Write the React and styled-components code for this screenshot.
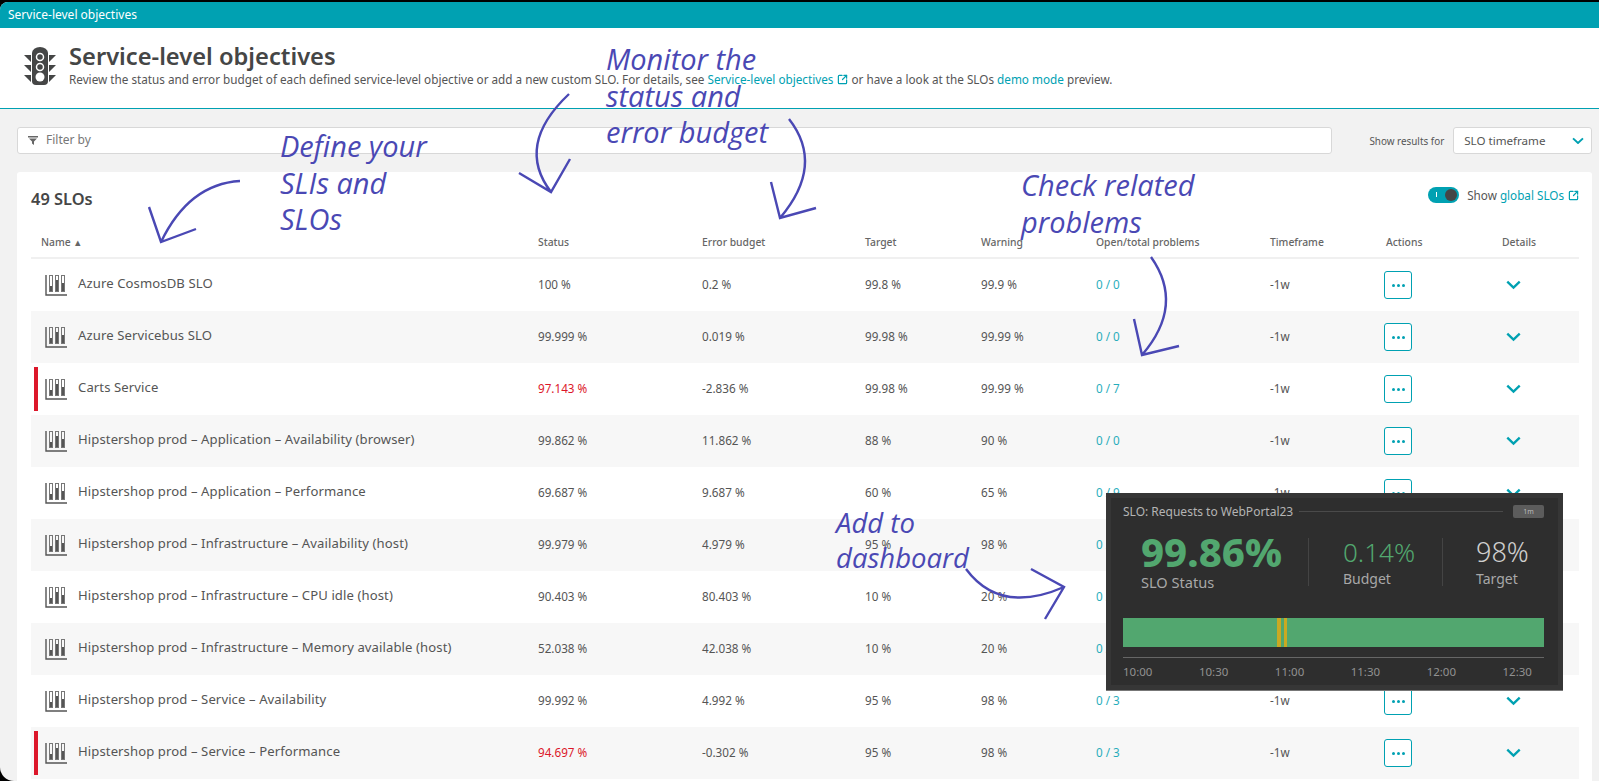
import React from 'react';
import styled, { createGlobalStyle } from 'styled-components';
import { SquareArrowOutUpRight } from 'lucide-react';

const Global = createGlobalStyle`
  html, body { margin: 0; padding: 0; background: #e9e7f6; }
  body { font-family: "Noto Sans", "Open Sans", sans-serif; color: #555; }
  * { box-sizing: border-box; }
`;

const Frame = styled.div`
  position: relative;
  width: 1599px;
  height: 781px;
  overflow: hidden;
  background: #000;
  padding-top: 2px;
`;
const Window = styled.div`
  height: 779px;
  background: #f2f2f2;
  border-radius: 8px 0 0 14px;
  overflow: hidden;
  display: flex;
  flex-direction: column;
`;
const TopBar = styled.div`
  height: 26px;
  flex: none;
  background: #00a1b2;
  color: #fff;
  font-size: 12px;
  line-height: 26px;
  padding-left: 8px;
`;
const Header = styled.header`
  height: 81px;
  flex: none;
  background: #fff;
  border-bottom: 1px solid #00a1b2;
  display: flex;
  align-items: flex-start;
  padding: 15px 0 0 23px;
  gap: 12px;
`;
const HeaderText = styled.div`
  display: flex;
  flex-direction: column;
`;
const Title = styled.h1`
  margin: 0;
  font-size: 23.7px;
  line-height: 26px;
  font-weight: 600;
  color: #454646;
`;
const Sub = styled.p`
  margin: 3px 0 0;
  font-size: 11.72px;
  line-height: 15px;
  color: #555;
  white-space: nowrap;
`;
const Link = styled.span`
  color: #00a1b2;
`;
const ExtIcon = styled(SquareArrowOutUpRight)`
  color: #00a1b2;
  vertical-align: -1px;
  margin-left: 4px;
`;
const Content = styled.main`
  flex: 1;
  padding: 18px 7px 0 17px;
  display: flex;
  flex-direction: column;
  gap: 18px;
`;
const FilterRow = styled.div`
  display: flex;
  align-items: center;
  height: 27px;
`;
const FilterBox = styled.div`
  width: 1318px;
  height: 27px;
  background: #fff;
  border: 1px solid #d8d8d8;
  border-radius: 3px;
  display: flex;
  align-items: center;
  gap: 8px;
  padding: 0 0 2px 10px;
  font-size: 12px;
  color: #777;
`;
const ResultsLabel = styled.span`
  margin-left: 37px;
  font-size: 9.9px;
  color: #555;
  white-space: nowrap;
`;
const Select = styled.div`
  margin-left: 9px;
  width: 139px;
  height: 27px;
  background: #fff;
  border: 1px solid #d8d8d8;
  border-radius: 3px;
  display: flex;
  align-items: center;
  justify-content: space-between;
  padding: 0 7px 0 10px;
  font-size: 11.6px;
  color: #555;
`;
const Card = styled.section`
  flex: 1;
  background: #fff;
  border-radius: 3px 3px 0 0;
  padding: 0 13px 0 14px;
`;
const CardHead = styled.div`
  height: 54px;
  display: flex;
  align-items: center;
  justify-content: space-between;
`;
const Count = styled.h2`
  margin: 0 0 2px;
  font-size: 16.4px;
  font-weight: 600;
  color: #454646;
`;
const GlobalToggle = styled.div`
  display: flex;
  align-items: center;
  gap: 8px;
  font-size: 11.7px;
  margin-top: -9px;
  color: #555;
`;
const Switch = styled.div`
  width: 31px;
  height: 16px;
  border-radius: 8px;
  background: #00a1b2;
  display: flex;
  align-items: center;
  justify-content: flex-end;
  padding-right: 2px;
`;
const Knob = styled.div`
  width: 12px;
  height: 12px;
  border-radius: 50%;
  background: #454646;
`;
const Tick = styled.div`
  width: 1px;
  height: 5px;
  background: #fff;
  margin-right: 8px;
`;
const cols = '507px 164px 163px 116px 115px 174px 116px 116px 76px';
const HeadRow = styled.div`
  display: grid;
  grid-template-columns: ${cols};
  height: 33px;
  align-items: center;
  border-bottom: 2px solid #f0f0f0;
  font-size: 10.35px;
  font-weight: 500;
  color: #666;
`;
const NameHead = styled.div`
  padding-left: 10px;
`;
const SortMark = styled.span`
  margin-left: 4px;
  font-size: 11px;
`;
const Row = styled.div`
  display: grid;
  grid-template-columns: ${cols};
  height: 52px;
  align-items: center;
  background: ${p => (p.$odd ? '#f7f7f7' : '#fff')};
  font-size: 11.7px;
  color: #555;
`;
const NameCell = styled.div`
  position: relative;
  height: 100%;
  display: flex;
  align-items: center;
  gap: 10px;
  padding: 0 0 4px 14px;
  font-size: 13.1px;
  color: #555;
  letter-spacing: 0.1px;
  white-space: nowrap;
`;
const Flag = styled.span`
  position: absolute;
  left: 3px;
  top: 4px;
  bottom: 4px;
  width: 4px;
  background: #dc172a;
`;
const Value = styled.div`
  padding-bottom: 2px;
`;
const Status = styled(Value)`
  color: ${p => (p.$bad ? '#dc172a' : '#555')};
`;
const Problems = styled(Value)`
  color: #00a1b2;
  opacity: 0.85;
`;
const ActionButton = styled.button`
  width: 28px;
  height: 28px;
  margin-left: -2px;
  padding: 0;
  background: #fff;
  border: 1px solid #00a1b2;
  border-radius: 3px;
  display: flex;
  align-items: center;
  justify-content: center;
  gap: 2px;
`;
const Dot = styled.i`
  width: 3px;
  height: 3px;
  border-radius: 50%;
  background: #00a1b2;
`;
const DetailCell = styled.div`
  padding-left: 4px;
  display: flex;
`;
const Overlay = styled.div`
  position: absolute;
  left: 0;
  top: 0;
  width: 1599px;
  height: 781px;
  pointer-events: none;
`;
const Note = styled.div`
  position: absolute;
  left: ${p => p.$x}px;
  top: ${p => p.$y}px;
  font-family: "Open Sans", sans-serif;
  font-size: ${p => p.$size || 29}px;
  line-height: ${p => p.$lh || 36.5}px;
  font-weight: 400;
  font-style: italic;
  color: #4a48b4;
  white-space: pre;
`;
const Popup = styled.aside`
  position: absolute;
  left: 1106px;
  top: 493px;
  width: 457px;
  height: 198px;
  background: #2e2e2e;
  border-bottom: 1px solid #777;
  box-shadow: inset 0 0 0 5px #363636;
  padding: 9px 19px 0 17px;
  display: flex;
  flex-direction: column;
`;
const PopTop = styled.div`
  display: flex;
  align-items: center;
  height: 18px;
  font-size: 12px;
  color: #b4b4b4;
  gap: 6px;
  white-space: nowrap;
`;
const PopLine = styled.div`
  flex: 1;
  height: 1px;
  background: #4a4a4a;
`;
const PopBadge = styled.div`
  width: 31px;
  height: 13px;
  margin-left: 4px;
  background: #5c5c5c;
  border-radius: 2px;
  font-size: 7px;
  line-height: 13px;
  text-align: center;
  color: #bbb;
`;
const Metrics = styled.div`
  display: flex;
  margin-top: 13px;
  height: 74px;
`;
const Metric = styled.div`
  width: ${p => p.$w}px;
  padding-left: ${p => p.$pad}px;
  border-right: ${p => (p.$last ? 'none' : '1px solid #444')};
  margin-top: 5px;
  height: 48px;
`;
const MetricValue = styled.div`
  font-size: ${p => p.$size}px;
  font-weight: ${p => p.$weight};
  line-height: ${p => p.$lh}px;
  color: ${p => p.$color};
  margin-top: ${p => p.$top}px;
  margin-bottom: ${p => p.$gap}px;
  white-space: nowrap;
`;
const MetricLabel = styled.div`
  font-size: ${p => p.$size}px;
  line-height: 18px;
  color: #a8a8a8;
  white-space: nowrap;
`;
const Timeline = styled.div`
  position: relative;
  margin-top: 11px;
  height: 29px;
  background: #52a76f;
`;
const Stripe = styled.div`
  position: absolute;
  top: 0;
  bottom: 0;
  left: ${p => p.$x}px;
  width: ${p => p.$w}px;
  background: #c9a923;
`;
const Axis = styled.div`
  margin-top: 10px;
  border-top: 1px solid #666;
  padding: 6px 12px 0 0;
  display: flex;
  justify-content: space-between;
  font-size: 11.5px;
  color: #919191;
`;

const TrafficLight = () => (
  <svg width="34" height="40" viewBox="0 0 34 40" style={{ flex: 'none', marginTop: 4 }}>
    <path d="M9 6a8 6 0 0 1 16 0v28a4 4 0 0 1-4 4H13a4 4 0 0 1-4-4z" fill="#454646" />
    <path d="M1 8h7v7zM33 8h-7v7zM1 18h7v7zM33 18h-7v7zM1 28h7v7zM33 28h-7v7z" fill="#454646" />
    <circle cx="17" cy="10" r="3.5" fill="none" stroke="#fff" strokeWidth="1.5" />
    <circle cx="17" cy="20" r="3.5" fill="none" stroke="#fff" strokeWidth="1.5" />
    <circle cx="17" cy="30" r="4.5" fill="#fff" />
  </svg>
);
const SloIcon = () => (
  <svg width="23" height="24" viewBox="0 0 23 24" style={{ flex: 'none', marginTop: 4 }}>
    <path d="M1 2v20h21" fill="none" stroke="#555" strokeWidth="1.4" />
    <g fill="none" stroke="#777" strokeWidth="1">
      <rect x="4.5" y="2.5" width="3" height="16" />
      <rect x="10.5" y="2.5" width="3" height="16" />
      <rect x="16.5" y="2.5" width="3" height="16" />
    </g>
    <rect x="5" y="13" width="2" height="5" fill="#555" />
    <rect x="11" y="7" width="2" height="11" fill="#555" />
    <rect x="17" y="10" width="2" height="8" fill="#555" />
  </svg>
);
const FilterIcon = () => (
  <svg width="10" height="10" viewBox="0 0 10 10">
    <path d="M0 1h10v1.4H0zM1 3.4h8L6 6.4V10L4 8.6V6.4z" fill="#666" />
  </svg>
);
const Chevron = ({ w = 15 }) => (
  <svg width={w} height={w * 0.65} viewBox="0 0 14 9">
    <path d="M1.2 1.5 7 7l5.8-5.5" fill="none" stroke="#00a1b2" strokeWidth="2.2" />
  </svg>
);

const rows = [
  ['Azure CosmosDB SLO', '100 %', '0.2 %', '99.8 %', '99.9 %', '0 / 0'],
  ['Azure Servicebus SLO', '99.999 %', '0.019 %', '99.98 %', '99.99 %', '0 / 0'],
  ['Carts Service', '97.143 %', '-2.836 %', '99.98 %', '99.99 %', '0 / 7', true],
  ['Hipstershop prod – Application – Availability (browser)', '99.862 %', '11.862 %', '88 %', '90 %', '0 / 0'],
  ['Hipstershop prod – Application – Performance', '69.687 %', '9.687 %', '60 %', '65 %', '0 / 9'],
  ['Hipstershop prod – Infrastructure – Availability (host)', '99.979 %', '4.979 %', '95 %', '98 %', '0 / 0'],
  ['Hipstershop prod – Infrastructure – CPU idle (host)', '90.403 %', '80.403 %', '10 %', '20 %', '0 / 0'],
  ['Hipstershop prod – Infrastructure – Memory available (host)', '52.038 %', '42.038 %', '10 %', '20 %', '0 / 0'],
  ['Hipstershop prod – Service – Availability', '99.992 %', '4.992 %', '95 %', '98 %', '0 / 3'],
  ['Hipstershop prod – Service – Performance', '94.697 %', '-0.302 %', '95 %', '98 %', '0 / 3', true],
];

const arrows = [
  'M240 181Q189 184 161 242M149 207 161 242 196 229',
  'M569 94Q515 145 551 192M519 173 551 192 570 159',
  'M789 119Q825 165 780 218M771 182 780 218 816 208',
  'M1151 257Q1185 305 1142 355M1134 319 1142 355 1179 346',
  'M966 569Q1000 615 1064 587M1031 569 1064 587 1045 619',
];

export default function App() {
  return (
    <>
      <Global />
      <Frame>
        <Window>
          <TopBar>Service-level objectives</TopBar>
          <Header>
            <TrafficLight />
            <HeaderText>
              <Title>Service-level objectives</Title>
              <Sub>
                Review the status and error budget of each defined service-level objective or add a new custom SLO. For details, see{' '}
                <Link>Service-level objectives</Link>
                <ExtIcon size={11} strokeWidth={2.6} />{' '}
                or have a look at the SLOs <Link>demo mode</Link> preview.
              </Sub>
            </HeaderText>
          </Header>
          <Content>
            <FilterRow>
              <FilterBox>
                <FilterIcon />
                Filter by
              </FilterBox>
              <ResultsLabel>Show results for</ResultsLabel>
              <Select>
                SLO timeframe
                <Chevron w={12} />
              </Select>
            </FilterRow>
            <Card>
              <CardHead>
                <Count>49 SLOs</Count>
                <GlobalToggle>
                  <Switch>
                    <Tick />
                    <Knob />
                  </Switch>
                  <span>
                    Show <Link>global SLOs</Link>
                    <ExtIcon size={11} strokeWidth={2.6} />
                  </span>
                </GlobalToggle>
              </CardHead>
              <HeadRow>
                <NameHead>Name<SortMark>▴</SortMark></NameHead>
                <div>Status</div>
                <div>Error budget</div>
                <div>Target</div>
                <div>Warning</div>
                <div>Open/total problems</div>
                <div>Timeframe</div>
                <div>Actions</div>
                <div>Details</div>
              </HeadRow>
              {rows.map((r, i) => (
                <Row key={r[0]} $odd={i % 2 === 1}>
                  <NameCell>
                    {r[6] && <Flag />}
                    <SloIcon />
                    {r[0]}
                  </NameCell>
                  <Status $bad={r[6]}>{r[1]}</Status>
                  <Value>{r[2]}</Value>
                  <Value>{r[3]}</Value>
                  <Value>{r[4]}</Value>
                  <Problems>{r[5]}</Problems>
                  <Value>-1w</Value>
                  <div>
                    <ActionButton>
                      <Dot />
                      <Dot />
                      <Dot />
                    </ActionButton>
                  </div>
                  <DetailCell>
                    <Chevron />
                  </DetailCell>
                </Row>
              ))}
            </Card>
          </Content>
        </Window>

        <Popup>
          <PopTop>
            SLO: Requests to WebPortal23
            <PopLine />
            <PopBadge>1m</PopBadge>
          </PopTop>
          <Metrics>
            <Metric $w={186} $pad={18}>
              <MetricValue $size={40} $weight={800} $lh={36} $color="#52a76f" $top={-4} $gap={3}>99.86%</MetricValue>
              <MetricLabel $size={14.6}>SLO Status</MetricLabel>
            </Metric>
            <Metric $w={134} $pad={34}>
              <MetricValue $size={26} $weight={300} $lh={34} $color="#52a76f" $top={-3} $gap={1}>0.14%</MetricValue>
              <MetricLabel $size={14}>Budget</MetricLabel>
            </Metric>
            <Metric $w={90} $pad={33} $last>
              <MetricValue $size={27} $weight={300} $lh={34} $color="#cfcfcf" $top={-3} $gap={1}>98%</MetricValue>
              <MetricLabel $size={14}>Target</MetricLabel>
            </Metric>
          </Metrics>
          <Timeline>
            <Stripe $x={154} $w={4} />
            <Stripe $x={161} $w={3} />
          </Timeline>
          <Axis>
            <span>10:00</span>
            <span>10:30</span>
            <span>11:00</span>
            <span>11:30</span>
            <span>12:00</span>
            <span>12:30</span>
          </Axis>
        </Popup>

        <Overlay>
          <svg width="1599" height="781" viewBox="0 0 1599 781">
            {arrows.map(d => (
              <path key={d} d={d} fill="none" stroke="#4a48b4" strokeWidth="2.4" />
            ))}
          </svg>
          <Note $x={606} $y={41}>{'Monitor the\nstatus and\nerror budget'}</Note>
          <Note $x={280} $y={128}>{'Define your\nSLIs and\nSLOs'}</Note>
          <Note $x={1021} $y={167}>{'Check related\nproblems'}</Note>
          <Note $x={836} $y={505} $lh={35} $size={27.5}>{'Add to\ndashboard'}</Note>
        </Overlay>
      </Frame>
    </>
  );
}
